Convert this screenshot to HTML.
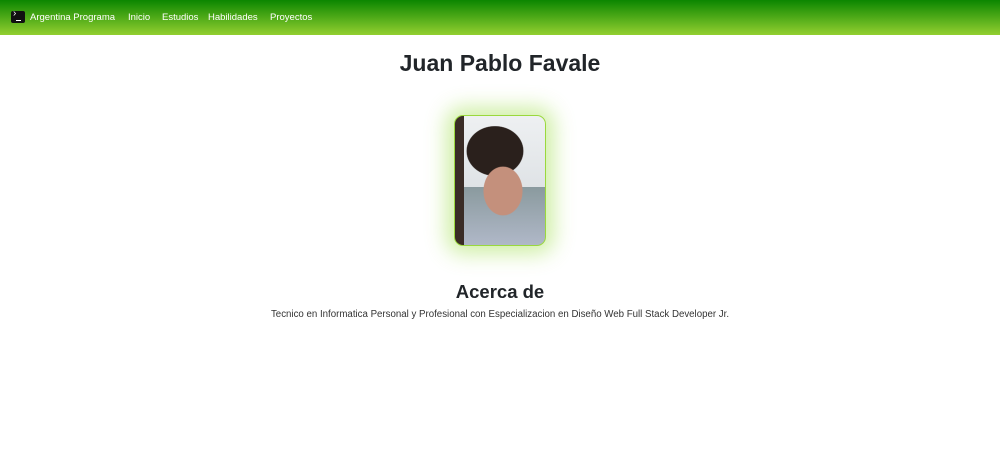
<!DOCTYPE html>
<html><head><meta charset="utf-8"><style>
body{margin:0;width:1000px;height:473px;background:#fff;font-family:"Liberation Sans",sans-serif;color:#212529;overflow:hidden}
nav{height:35px;background:linear-gradient(#0b8600,#93cf30);position:relative;color:#fff;font-size:9.5px}
.logo{position:absolute;left:11px;top:11px;width:14px;height:12px;background:#111;border-radius:2px}
.logo:after{content:"";position:absolute;left:5px;bottom:2px;width:5px;height:1px;background:#fff}
.logo:before{content:"›";position:absolute;left:2px;top:-3px;color:#fff;font-size:10px}
nav span{position:absolute;top:12px;white-space:nowrap}
h1{position:absolute;top:50px;left:0;width:1000px;text-align:center;margin:0;font-size:23px;font-weight:bold}
.ph{position:absolute;left:454px;top:115px;width:90px;height:129px;border:1px solid #9ad83d;border-radius:9px;box-shadow:0 0 20px 8px rgba(150,220,60,.45);overflow:hidden;
background:radial-gradient(ellipse 32px 40px at 48px 75px,#c4907c 60%,transparent 62%),radial-gradient(ellipse 40px 35px at 40px 35px,#2a201c 70%,transparent 72%),linear-gradient(90deg,#3a2c26 0,#3a2c26 10%,transparent 10%),linear-gradient(#eef0f2 0,#dfe3e6 55%,#8a9a9e 55%,#b0b8c8 100%)}
h2{position:absolute;top:281px;left:0;width:1000px;text-align:center;margin:0;font-size:18.5px;font-weight:bold}
p{position:absolute;top:309px;left:0;width:1000px;text-align:center;margin:0;font-size:9.7px;color:#333}
</style></head><body>
<nav><div class="logo"></div><span style="left:30px">Argentina Programa</span><span style="left:128px">Inicio</span><span style="left:162px">Estudios</span><span style="left:208px">Habilidades</span><span style="left:270px">Proyectos</span></nav>
<h1>Juan Pablo Favale</h1>
<div class="ph"></div>
<h2>Acerca de</h2>
<p>Tecnico en Informatica Personal y Profesional con Especializacion en Diseño Web Full Stack Developer Jr.</p>
</body></html>
